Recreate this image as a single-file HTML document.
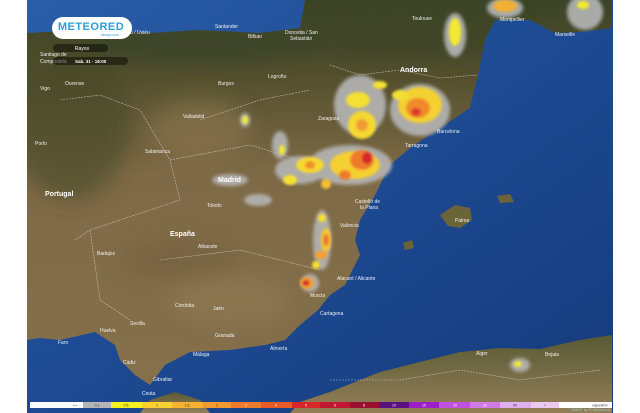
<!DOCTYPE html>
<html><head><meta charset="utf-8"><style>
html,body{margin:0;padding:0;background:#fff;width:640px;height:413px;overflow:hidden;font-family:"Liberation Sans",sans-serif}
svg{position:absolute;left:0;top:0}
</style></head><body>
<svg width="640" height="413" viewBox="0 0 640 413" xmlns="http://www.w3.org/2000/svg">
<defs>
<linearGradient id="sea" x1="0" y1="0" x2="1" y2="1">
<stop offset="0" stop-color="#2a5ea8"/><stop offset="0.5" stop-color="#1d4a92"/><stop offset="1" stop-color="#163a7c"/></linearGradient>
<linearGradient id="land" x1="0" y1="0" x2="0" y2="1">
<stop offset="0" stop-color="#3a4426"/><stop offset="0.2" stop-color="#55502e"/><stop offset="0.45" stop-color="#7e6a46"/><stop offset="1" stop-color="#86704c"/></linearGradient>
<linearGradient id="afr" x1="0" y1="0" x2="0" y2="1">
<stop offset="0" stop-color="#585a34"/><stop offset="1" stop-color="#947e58"/></linearGradient>
<filter id="b" x="-50%" y="-50%" width="200%" height="200%"><feGaussianBlur stdDeviation="1.8"/></filter>
<filter id="b2" x="-50%" y="-50%" width="200%" height="200%"><feGaussianBlur stdDeviation="1.2"/></filter>
<filter id="b3" x="-50%" y="-50%" width="200%" height="200%"><feGaussianBlur stdDeviation="10"/></filter>
<clipPath id="mc"><rect x="27" y="0" width="586" height="413"/></clipPath>
<clipPath id="lc"><path d="M27,33 L90,30 L150,33 L200,30 L260,33 L300,28 L305,0 L612,0 L612,28 L580,32 L555,33 L530,20 L495,20 L485,40 L478,75 L470,108 L440,128 L410,148 L390,165 L375,195 L360,220 L355,240 L360,255 L345,285 L330,295 L318,310 L300,325 L285,340 L265,345 L230,350 L190,352 L165,365 L150,385 L135,375 L120,360 L115,345 L95,332 L60,340 L40,338 L27,340 Z"/></clipPath>
</defs>
<g clip-path="url(#mc)">
<rect x="27" y="0" width="586" height="413" fill="url(#sea)"/>
<path d="M27,33 L90,30 L150,33 L200,30 L260,33 L300,28 L305,0 L612,0 L612,28 L580,32 L555,33 L530,20 L495,20 L485,40 L478,75 L470,108 L440,128 L410,148 L390,165 L375,195 L360,220 L355,240 L360,255 L345,285 L330,295 L318,310 L300,325 L285,340 L265,345 L230,350 L190,352 L165,365 L150,385 L135,375 L120,360 L115,345 L95,332 L60,340 L40,338 L27,340 Z" fill="url(#land)"/>
<g clip-path="url(#lc)" filter="url(#b3)">
<ellipse cx="400" cy="30" rx="120" ry="30" fill="#3e4628" opacity="0.8"/>
<ellipse cx="70" cy="120" rx="60" ry="80" fill="#46492a" opacity="0.6"/>
<ellipse cx="200" cy="45" rx="120" ry="18" fill="#374226" opacity="0.7"/>
<ellipse cx="200" cy="130" rx="50" ry="30" fill="#8c7650" opacity="0.6"/>
<ellipse cx="230" cy="300" rx="60" ry="25" fill="#8f7a52" opacity="0.6"/>
<ellipse cx="180" cy="260" rx="60" ry="20" fill="#6a5a38" opacity="0.4"/>
</g>
<path d="M140,413 L150,400 L175,392 L200,400 L210,413 Z" fill="url(#afr)"/>
<path d="M290,413 L300,402 L330,392 L380,372 L420,362 L460,352 L500,348 L540,349 L580,340 L612,335 L612,413 Z" fill="url(#afr)"/>
<path d="M440,215 L455,205 L470,208 L472,220 L460,228 L448,226 Z" fill="#6a6438"/>
<path d="M497,196 L510,194 L514,202 L500,203 Z" fill="#6a6438"/>
<path d="M403,243 L412,240 L414,248 L405,250 Z" fill="#6a6438"/>
<g fill="none" stroke="#e8e4d8" stroke-width="0.6" stroke-dasharray="2,1" opacity="0.7">
<path d="M330,65 L360,75 L400,70 L440,78 L478,75"/>
<path d="M60,100 L100,95 L140,110 L170,160 L180,200 L90,230 L75,240"/>
<path d="M170,160 L250,145 L300,160 L350,155"/>
<path d="M90,230 L100,300 L130,320"/>
<path d="M160,260 L240,250 L320,270"/>
<path d="M200,120 L260,100 L310,90"/>
<path d="M330,380 L400,380 L460,370 L520,380 L600,370"/>
</g>
<g filter="url(#b)" fill="#b4b4b4" opacity="0.92">
<ellipse cx="455" cy="35" rx="11" ry="22"/><ellipse cx="505" cy="8" rx="18" ry="10"/><ellipse cx="585" cy="12" rx="18" ry="18"/>
<ellipse cx="360" cy="105" rx="26" ry="30"/><ellipse cx="420" cy="110" rx="30" ry="26"/>
<ellipse cx="350" cy="165" rx="42" ry="20"/><ellipse cx="300" cy="170" rx="25" ry="14"/>
<ellipse cx="280" cy="145" rx="8" ry="14"/><ellipse cx="245" cy="120" rx="5" ry="7"/>
<ellipse cx="230" cy="180" rx="18" ry="6"/><ellipse cx="258" cy="200" rx="14" ry="6"/>
<ellipse cx="322" cy="240" rx="9" ry="30"/><ellipse cx="310" cy="283" rx="9" ry="9"/>
<ellipse cx="520" cy="365" rx="10" ry="7"/>
</g>
<g filter="url(#b2)">
<ellipse cx="455" cy="32" rx="6" ry="14" fill="#f2ea30"/>
<ellipse cx="505" cy="6" rx="12" ry="6" fill="#f2b030"/>
<ellipse cx="583" cy="5" rx="6" ry="4" fill="#f2ea30"/>
<ellipse cx="358" cy="100" rx="12" ry="8" fill="#f4e030"/>
<ellipse cx="362" cy="125" rx="14" ry="14" fill="#f5d830"/>
<ellipse cx="362" cy="125" rx="6" ry="6" fill="#f29a30"/>
<ellipse cx="420" cy="105" rx="22" ry="18" fill="#f4d030"/>
<ellipse cx="418" cy="108" rx="12" ry="10" fill="#f08a2c"/>
<ellipse cx="416" cy="112" rx="5" ry="4" fill="#e03828"/>
<ellipse cx="400" cy="95" rx="8" ry="5" fill="#f4e030"/>
<ellipse cx="380" cy="85" rx="7" ry="4" fill="#f4e030"/>
<ellipse cx="355" cy="165" rx="25" ry="14" fill="#f5d030"/>
<ellipse cx="362" cy="160" rx="12" ry="10" fill="#ee7a2c"/>
<ellipse cx="367" cy="158" rx="5" ry="6" fill="#d8262a"/>
<ellipse cx="345" cy="175" rx="6" ry="5" fill="#ee7a2c"/>
<ellipse cx="310" cy="165" rx="14" ry="8" fill="#f5d830"/>
<ellipse cx="310" cy="165" rx="5" ry="4" fill="#f0902c"/>
<ellipse cx="290" cy="180" rx="7" ry="5" fill="#f5e030"/>
<ellipse cx="326" cy="184" rx="5" ry="5" fill="#f5c030"/>
<ellipse cx="282" cy="150" rx="3" ry="5" fill="#f2ea30"/>
<ellipse cx="245" cy="120" rx="3" ry="4" fill="#f2ea30"/>
<ellipse cx="322" cy="218" rx="4" ry="4" fill="#f5e030"/>
<ellipse cx="326" cy="240" rx="5" ry="12" fill="#f5c830"/>
<ellipse cx="326" cy="240" rx="3" ry="6" fill="#ee7a2c"/>
<ellipse cx="321" cy="255" rx="6" ry="4" fill="#f5a030"/>
<ellipse cx="316" cy="265" rx="4" ry="4" fill="#f5e030"/>
<ellipse cx="307" cy="283" rx="7" ry="6" fill="#f0a030"/>
<ellipse cx="306" cy="283" rx="3.5" ry="3" fill="#d8262a"/>
<ellipse cx="518" cy="364" rx="4" ry="3" fill="#f2ea30"/>
</g>
<g font-size="5" fill="#fff" opacity="0.9">
<text x="117" y="34">Oviedo / Uviéu</text><text x="215" y="28">Santander</text><text x="248" y="38">Bilbao</text>
<text x="285" y="34">Donostia / San</text><text x="290" y="40">Sebastián</text>
<text x="412" y="20">Toulouse</text><text x="500" y="21">Montpellier</text><text x="555" y="36">Marseille</text>
<text x="40" y="56">Santiago de</text><text x="40" y="63">Compostela</text><text x="40" y="90">Vigo</text><text x="65" y="85">Ourense</text>
<text x="35" y="145">Porto</text><text x="183" y="118">Valladolid</text><text x="218" y="85">Burgos</text><text x="268" y="78">Logroño</text>
<text x="145" y="153">Salamanca</text><text x="318" y="120">Zaragoza</text><text x="437" y="133">Barcelona</text><text x="405" y="147">Tarragona</text>
<text x="355" y="203">Castelló de</text><text x="360" y="209">la Plana</text><text x="340" y="227">València</text><text x="455" y="222">Palma</text>
<text x="337" y="280">Alacant / Alicante</text><text x="320" y="315">Cartagena</text><text x="310" y="297">Murcia</text>
<text x="270" y="350">Almería</text><text x="215" y="337">Granada</text><text x="193" y="356">Málaga</text><text x="175" y="307">Córdoba</text>
<text x="213" y="310">Jaén</text><text x="130" y="325">Sevilla</text><text x="100" y="332">Huelva</text><text x="123" y="364">Cádiz</text>
<text x="153" y="381">Gibraltar</text><text x="142" y="395">Ceuta</text><text x="58" y="344">Faro</text><text x="97" y="255">Badajoz</text>
<text x="207" y="207">Toledo</text><text x="198" y="248">Albacete</text><text x="476" y="355">Alger</text><text x="545" y="356">Bejaia</text>
</g>
<g font-size="7" font-weight="bold" fill="#fff">
<text x="400" y="72">Andorra</text><text x="218" y="182">Madrid</text><text x="170" y="236">España</text><text x="45" y="196">Portugal</text>
</g>
<rect x="53" y="44" width="55" height="8" rx="4" fill="#000" opacity="0.45"/>
<text x="82" y="50" font-size="5" fill="#fff" text-anchor="middle">Rayos</text>
<rect x="53" y="57" width="75" height="8" rx="4" fill="#000" opacity="0.45"/>
<text x="75" y="63" font-size="4.5" fill="#fff" font-weight="bold">Sab. 31 · 18:00</text>
<rect x="52" y="17" width="80" height="22" rx="11" fill="#fff"/>
<text x="91" y="30" font-size="11" font-weight="bold" fill="#2a9fd8" text-anchor="middle" letter-spacing="0.5">METEORED</text>
<text x="110" y="36" font-size="3.5" fill="#2a9fd8" text-anchor="middle">tiempo.com</text>
<text x="610" y="411" font-size="4" fill="#9cc" text-anchor="end">©MVF by © Meteored</text>
</g>
<g>
<rect x="30" y="402" width="53" height="6" fill="#fff"/>
<rect x="83" y="402" width="28" height="6" fill="#b4b4b4"/>
<rect x="111" y="402" width="31" height="6" fill="#f5f020"/>
<rect x="142" y="402" width="30" height="6" fill="#f8d030"/>
<rect x="172" y="402" width="31" height="6" fill="#f7b030"/>
<rect x="203" y="402" width="28" height="6" fill="#f29a30"/>
<rect x="231" y="402" width="30" height="6" fill="#ee7a2c"/>
<rect x="261" y="402" width="31" height="6" fill="#e85a28"/>
<rect x="292" y="402" width="28" height="6" fill="#d8262a"/>
<rect x="320" y="402" width="30" height="6" fill="#c01830"/>
<rect x="350" y="402" width="29" height="6" fill="#9a1030"/>
<rect x="379" y="402" width="30" height="6" fill="#5a1080"/>
<rect x="409" y="402" width="30" height="6" fill="#9b20c8"/>
<rect x="439" y="402" width="31" height="6" fill="#c050e0"/>
<rect x="470" y="402" width="30" height="6" fill="#d07ae8"/>
<rect x="500" y="402" width="31" height="6" fill="#e0b0ee"/>
<rect x="531" y="402" width="28" height="6" fill="#eccaf0"/>
<rect x="559" y="402" width="53" height="6" fill="#fff"/>
<g font-size="3.5" fill="#333" text-anchor="middle">
<text x="75" y="406.5">• •</text><text x="97" y="406.5">0.1</text><text x="126" y="406.5">0.5</text><text x="157" y="406.5">1</text>
<text x="187" y="406.5">1.5</text><text x="217" y="406.5">2</text><text x="246" y="406.5" fill="#fff">3</text><text x="276" y="406.5" fill="#fff">4</text>
<text x="306" y="406.5" fill="#fff">5</text><text x="335" y="406.5" fill="#fff">6</text><text x="364" y="406.5" fill="#fff">8</text>
<text x="394" y="406.5" fill="#fff">10</text><text x="424" y="406.5" fill="#fff">15</text><text x="455" y="406.5" fill="#fff">20</text>
<text x="485" y="406.5" fill="#fff">30</text><text x="515" y="406.5">50</text><text x="545" y="406.5">&gt;</text><text x="600" y="406.5">rayos/km²</text>
</g>
</g>
</svg>
</body></html>
